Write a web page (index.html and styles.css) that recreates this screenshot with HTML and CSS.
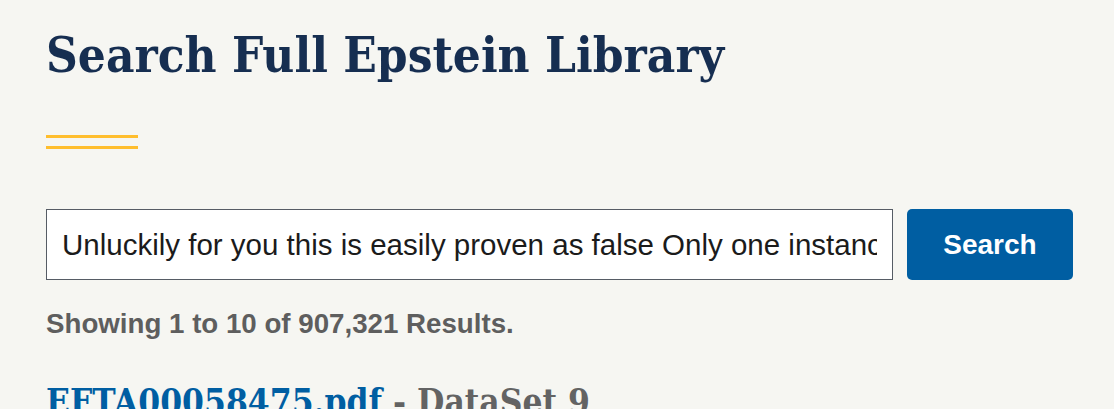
FILE: index.html
```html
<!DOCTYPE html>
<html lang="en">
<head>
<meta charset="utf-8">
<title>Search Full Epstein Library</title>
<link rel="stylesheet" href="styles.css">
</head>
<body>
<main class="page">
  <h1 class="title">Search Full Epstein Library</h1>
  <div class="rule"></div>
  <form class="search" onsubmit="return false">
    <input class="search-input" type="text" value="Unluckily for you this is easily proven as false Only one instance of this document exists in the library">
    <button class="search-btn" type="submit">Search</button>
  </form>
  <p class="count">Showing 1 to 10 of 907,321 Results.</p>
  <h2 class="result"><a class="result-link" href="#">EFTA00058475.pdf</a><span class="result-set"> - DataSet 9</span></h2>
</main>
</body>
</html>
```

FILE: styles.css
```css
html, body {
  margin: 0;
  padding: 0;
}
body {
  background: #f6f6f2;
}
.page {
  padding: 0 41px 0 46px;
}
.title {
  margin: 0;
  padding-top: 27px;
  font-family: "DejaVu Serif Condensed", "DejaVu Serif", serif;
  font-stretch: condensed;
  font-weight: 700;
  font-size: 49px;
  line-height: 56px;
  color: #162e51;
}
.rule {
  width: 92px;
  height: 8px;
  margin-top: 52px;
  border-top: 3px solid #ffbe2e;
  border-bottom: 3px solid #ffbe2e;
}
.search {
  display: flex;
  gap: 14px;
  margin-top: 60px;
}
.search-input {
  flex: 1;
  min-width: 0;
  box-sizing: border-box;
  height: 71px;
  margin: 0;
  padding: 0 15px;
  border: 1px solid #565c65;
  border-radius: 0;
  background: #ffffff;
  font-family: "Liberation Sans", Arial, sans-serif;
  font-size: 29.5px;
  color: #1b1b1b;
  outline: none;
}
.search-btn {
  flex: none;
  box-sizing: border-box;
  width: 166px;
  height: 71px;
  margin: 0;
  border: 0;
  border-radius: 5px;
  background: #005ea2;
  color: #ffffff;
  font-family: "Liberation Sans", Arial, sans-serif;
  font-weight: 700;
  font-size: 28px;
}
.count {
  margin: 27px 0 0;
  font-family: "Liberation Sans", Arial, sans-serif;
  font-weight: 700;
  font-size: 27.7px;
  line-height: 34px;
  color: #5e5e5e;
}
.result {
  margin: 43px 0 0;
  font-family: "DejaVu Serif Condensed", "DejaVu Serif", serif;
  font-stretch: condensed;
  font-weight: 700;
  font-size: 35px;
  line-height: 36px;
}
.result-link {
  color: #005ea2;
  text-decoration: none;
}
.result-set {
  color: #636363;
}
```
